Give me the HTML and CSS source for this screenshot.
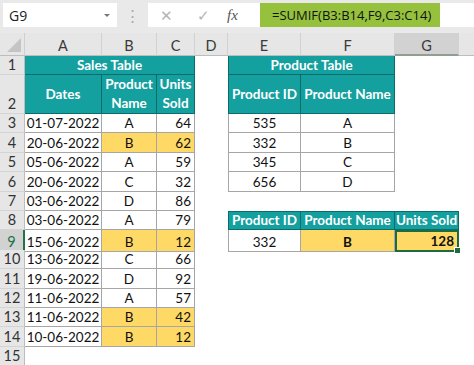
FILE: index.html
```html
<!DOCTYPE html>
<html>
<head>
    <title>SUMIF - Sales Table</title>
    <link rel="stylesheet" href="styles.css">
</head>
<body>
    <div class="app">
        <div class="formula-bar">
            <div class="name-box">
                <span>G9</span>
                <span class="caret"></span>
            </div>
            <div class="grip">⋮</div>
            <div class="fx-box">
                <span class="tool cancel">✕</span>
                <span class="tool enter">✓</span>
                <span class="fx">fx</span>
            </div>
            <div class="formula">=SUMIF(B3:B14,F9,C3:C14)</div>
            <div class="formula-rest"></div>
        </div>

        <div class="sheet">
            <div class="row colhead">
                <div class="corner"><span class="tri"></span></div>
                <div class="ch">A</div>
                <div class="ch">B</div>
                <div class="ch">C</div>
                <div class="ch">D</div>
                <div class="ch">E</div>
                <div class="ch">F</div>
                <div class="ch sel">G</div>
                <div class="ch last"></div>
            </div>

            <div class="row r1">
                <div class="rh">1</div>
                <div class="cell hd ac">Sales Table</div>
                <div class="cell hd ef e">Product Table</div>
            </div>
            <div class="row tall">
                <div class="rh">2</div>
                <div class="cell hd a">Dates</div>
                <div class="cell hd b">Product<br>Name</div>
                <div class="cell hd c">Units<br>Sold</div>
                <div class="cell hd e">Product ID</div>
                <div class="cell hd f">Product Name</div>
            </div>

            <div class="row">
                <div class="rh">3</div>
                <div class="cell a">01-07-2022</div>
                <div class="cell b">A</div>
                <div class="cell c num">64</div>
                <div class="cell e">535</div>
                <div class="cell f">A</div>
            </div>
            <div class="row">
                <div class="rh">4</div>
                <div class="cell a">20-06-2022</div>
                <div class="cell b yl">B</div>
                <div class="cell c num yl">62</div>
                <div class="cell e">332</div>
                <div class="cell f">B</div>
            </div>
            <div class="row">
                <div class="rh">5</div>
                <div class="cell a">05-06-2022</div>
                <div class="cell b">A</div>
                <div class="cell c num">59</div>
                <div class="cell e">345</div>
                <div class="cell f">C</div>
            </div>
            <div class="row">
                <div class="rh">6</div>
                <div class="cell a">20-06-2022</div>
                <div class="cell b">C</div>
                <div class="cell c num">32</div>
                <div class="cell e">656</div>
                <div class="cell f">D</div>
            </div>
            <div class="row">
                <div class="rh">7</div>
                <div class="cell a">03-06-2022</div>
                <div class="cell b">D</div>
                <div class="cell c num">86</div>
            </div>
            <div class="row">
                <div class="rh">8</div>
                <div class="cell a">03-06-2022</div>
                <div class="cell b">A</div>
                <div class="cell c num">79</div>
                <div class="cell hd e top">Product ID</div>
                <div class="cell hd f top">Product Name</div>
                <div class="cell hd g top">Units Sold</div>
            </div>
            <div class="row">
                <div class="rh active">9</div>
                <div class="cell a">15-06-2022</div>
                <div class="cell b yl">B</div>
                <div class="cell c num yl">12</div>
                <div class="cell e">332</div>
                <div class="cell f yl bold">B</div>
                <div class="cell g num yl bold current">128<span class="handle"></span></div>
            </div>
            <div class="row">
                <div class="rh">10</div>
                <div class="cell a">13-06-2022</div>
                <div class="cell b">C</div>
                <div class="cell c num">66</div>
            </div>
            <div class="row">
                <div class="rh">11</div>
                <div class="cell a">19-06-2022</div>
                <div class="cell b">D</div>
                <div class="cell c num">92</div>
            </div>
            <div class="row">
                <div class="rh">12</div>
                <div class="cell a">11-06-2022</div>
                <div class="cell b">A</div>
                <div class="cell c num">57</div>
            </div>
            <div class="row">
                <div class="rh">13</div>
                <div class="cell a">11-06-2022</div>
                <div class="cell b yl">B</div>
                <div class="cell c num yl">42</div>
            </div>
            <div class="row">
                <div class="rh">14</div>
                <div class="cell a">10-06-2022</div>
                <div class="cell b yl">B</div>
                <div class="cell c num yl">12</div>
            </div>
            <div class="row">
                <div class="rh">15</div>
                <div class="cell blank"></div>
            </div>
        </div>
    </div>
</body>
</html>
```

FILE: styles.css
```css
html, body { margin: 0; height: 365px; }
body { font-family: Lato, "Liberation Sans", sans-serif; background: #fff; }
.app { width: 474px; height: 365px; overflow: hidden; background: #e9e9e9; }

/* formula bar */
.formula-bar { display: flex; height: 24px; padding: 3px 0 6px 3px; font-family: "Open Sans", sans-serif; font-size: 13px; color: #222; }
.name-box { width: 114px; background: #fff; display: flex; align-items: center; justify-content: space-between; padding: 0 7px 0 6px; box-sizing: border-box; font-size: 14px; }
.caret { width: 0; height: 0; border-left: 3px solid transparent; border-right: 3px solid transparent; border-top: 3px solid #777; }
.grip { width: 31px; display: flex; align-items: center; justify-content: center; color: #a8a8a8; font-size: 15px; }
.fx-box { width: 112px; background: #fff; display: flex; align-items: center; }
.tool { color: #b4b4b4; font-size: 15px; width: 20px; text-align: center; }
.cancel { margin-left: 8px; }
.enter { margin-left: 17px; }
.fx { margin-left: 14px; font-family: "Liberation Serif", serif; font-style: italic; font-size: 15px; color: #555; }
.formula { width: 180px; background: #95c13d; display: flex; align-items: center; padding-left: 12px; box-sizing: border-box; color: #111; }
.formula-rest { flex: 1; background: #fff; }

/* sheet */
.sheet { background: #fff; height: 332px; }
.row { display: grid; grid-template-columns: 25px 77px 55px 38px 33px 73px 94px 64px 1fr; height: 19.4px; font-size: 13.5px; color: #111; }
.colhead { height: 23px; background: #e6e6e6; }
.r1 { height: 19px; }
.tall { height: 39px; }

.corner { position: relative; border-right: 1px solid #cfcfcf; border-bottom: 1px solid #bdbdbd; }
.tri { position: absolute; right: 3px; bottom: 3px; width: 14px; height: 14px; background: #c4c4c4; clip-path: polygon(100% 0, 100% 100%, 0 100%); }
.ch { display: flex; align-items: center; justify-content: center; padding-top: 3px; border-right: 1px solid #d2d2d2; border-bottom: 1px solid #bdbdbd; box-sizing: border-box; color: #3a3a3a; font-size: 14.5px; }
.ch.sel { background: #d2d2d2; border-bottom: 2px solid #8f9f93; }
.ch.last { border-right: 0; }

.rh { grid-column: 1; background: #e6e6e6; border-right: 1px solid #bdbdbd; border-bottom: 1px solid #d4d4d4; box-sizing: border-box; display: flex; align-items: flex-end; justify-content: center; line-height: 18px; color: #333; font-size: 14.5px; }
.rh.active { background: #d2d2d2; color: #217346; border-right: 2px solid #217346; }

.cell { display: flex; align-items: flex-end; justify-content: center; padding: 0 3px; line-height: 18px; border: 0 solid #a6a6a6; border-width: 0 1px 1px 0; box-sizing: border-box; white-space: nowrap; overflow: hidden; }
.cell.blank { border: 0; }
.a { grid-column: 2; }
.b { grid-column: 3; }
.c { grid-column: 4; }
.e { grid-column: 6; border-left-width: 1px; }
.f { grid-column: 7; }
.g { grid-column: 8; }
.ac { grid-column: 2 / 5; }
.ef { grid-column: 6 / 8; }
.top { border-top-width: 1px; }

.num { justify-content: flex-end; }
.yl { background: #ffd966; }
.bold { font-weight: bold; }
.hd { background: #15a0a0; color: #fff; font-weight: bold; align-items: center; text-align: center; line-height: 19px; border-color: #0c6b6b; padding: 0; }

.current { position: relative; overflow: visible; border: 2px solid #1d6b40; }
.handle { position: absolute; right: -4px; bottom: -4px; width: 5px; height: 5px; background: #1d6b40; border: 1px solid #fff; }
```
